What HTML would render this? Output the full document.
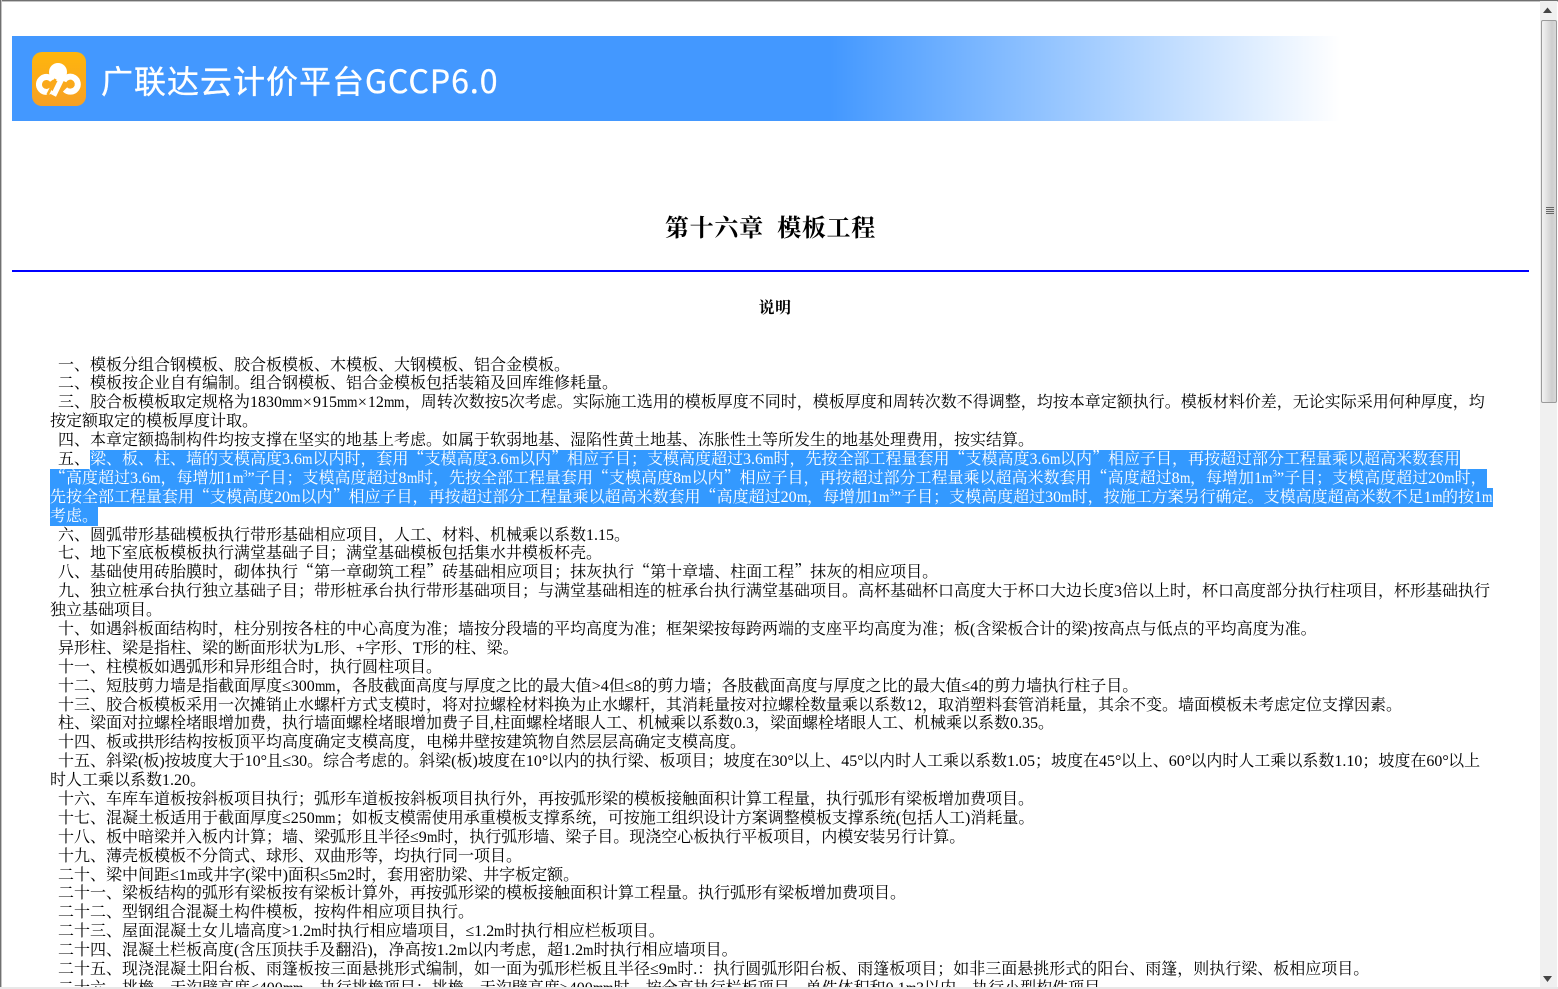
<!DOCTYPE html>
<html lang="zh">
<head>
<meta charset="utf-8">
<title>第十六章 模板工程</title>
<style>
html,body{margin:0;padding:0;width:1558px;height:989px;overflow:hidden;background:#fff}
body{position:relative;font-family:"Liberation Serif","Noto Serif CJK SC",serif;color:#000;font-size:16px}
.abs{position:absolute}
#frameT{left:0;top:0;width:1558px;height:1px;background:#707070;box-shadow:0 1px 0 #c4c4c4}
#frameL{left:0;top:0;width:1px;height:989px;background:#707070;box-shadow:1px 0 0 #c4c4c4}
#frameB{left:0;top:987px;width:1558px;height:2px;background:#e8e8e8;z-index:5}
#banner{left:12px;top:36px;width:1517px;height:85px;background:linear-gradient(to right,#4398ff 0,#4398ff 818px,#fff 1328px)}
#logo{left:20px;top:16px;width:54px;height:54px;border-radius:10px;background:linear-gradient(#ffb60c,#f7a024)}
#brand{left:89px;top:19px;height:50px;line-height:50px;font-family:"Noto Sans CJK SC",sans-serif;font-size:32px;color:#fff;white-space:nowrap;letter-spacing:1px;-webkit-text-stroke:.35px #fff}
#h1{left:0;top:214px;width:1541px;text-align:center;font-size:24px;font-weight:bold;line-height:30px;white-space:pre;letter-spacing:.7px}
#rule{left:12px;top:270px;width:1517px;height:2px;background:#0000ff}
#h2{left:0;top:299px;width:1550px;text-align:center;font-size:16px;font-weight:bold;line-height:19px;letter-spacing:.5px}
#text{left:50px;top:355.5px;width:1480px;height:631.5px;overflow:hidden}
#text div{height:18.9px;line-height:19px;white-space:nowrap}
#text div.i{padding-left:8px}
i{font-style:normal;font-family:"Noto Serif CJK SC",serif;line-height:0}
u{text-decoration:none;display:inline-block;margin-right:-2px;transform:scaleX(.84);transform-origin:0 50%}
s{text-decoration:none;letter-spacing:-.7px}
b{font-weight:normal;letter-spacing:1px}
sup{font-size:9px;line-height:0}
.s{background:#3399ff;color:#fff;display:inline-block;height:19px;line-height:19px;vertical-align:top}
#sb{left:1540px;top:1px;width:17px;height:986px;background:#f0f0f0}
#thumb{left:1px;top:19px;width:14px;height:381px;border:1px solid #9a9a9a;border-radius:2px;background:linear-gradient(to right,#f2f2f2,#e4e4e4 30%,#cfcfcf 70%,#d8d8d8)}
.g{left:4px;width:8px;height:1px;background:#666}
</style>
</head>
<body>
<div class="abs" id="frameT"></div>
<div class="abs" id="frameL"></div>
<div class="abs" id="frameB"></div>

<div class="abs" id="banner">
  <div class="abs" id="logo">
    <svg width="54" height="54" viewBox="0 0 54 54" style="display:block">
      <circle cx="26" cy="20" r="9" fill="#fff"/>
      <path d="M20.5 28A7.5 7.5 0 1 0 19.5 38" fill="none" stroke="#fff" stroke-width="6"/>
      <path d="M23.5 27L15.5 43" fill="none" stroke="#fbaa1a" stroke-width="2.6"/>
      <path d="M31 24L21.5 43.5" fill="none" stroke="#fff" stroke-width="5.5"/>
      <path d="M31.5 29A7.5 7.5 0 1 1 33 37.5" fill="none" stroke="#fff" stroke-width="6"/>
    </svg>
  </div>
  <div class="abs" id="brand">广联达云计价平台GCCP6.0</div>
</div>

<div class="abs" id="h1">第十六章  模板工程</div>
<div class="abs" id="rule"></div>
<div class="abs" id="h2">说明</div>

<div class="abs" id="text">
<div class="i">一、模板分组合钢模板、胶合板模板、木模板、大钢模板、铝合金模板。</div>
<div class="i">二、模板按企业自有编制。组合钢模板、铝合金模板包括装箱及回库维修耗量。</div>
<div class="i">三、胶合板模板取定规格为1830<u>m</u><u>m</u><b>×</b>915<u>m</u><u>m</u><b>×</b>12<u>m</u><u>m</u>，周转次数按5次考虑。实际施工选用的模板厚度不同时，模板厚度和周转次数不得调整，均按本章定额执行。模板材料价差，无论实际采用何种厚度，均</div>
<div>按定额取定的模板厚度计取。</div>
<div class="i">四、本章定额捣制构件均按支撑在坚实的地基上考虑。如属于软弱地基、湿陷性黄土地基、冻胀性土等所发生的地基处理费用，按实结算。</div>
<div class="i">五、<span class="s">梁、板、柱、墙的支模高度3.6<u>m</u>以内时，套用<i>“</i>支模高度3.6<u>m</u>以内<i>”</i>相应子目；支模高度超过3.6<u>m</u>时，先按全部工程量套用<i>“</i>支模高度3.6<u>m</u>以内<i>”</i>相应子目，再按超过部分工程量乘以超高米数套用</span></div>
<div><span class="s"><i>“</i>高度超过3.6<u>m</u>，每增加1<u>m</u><sup>3</sup>”子目；支模高度超过8<u>m</u>时，先按全部工程量套用<i>“</i>支模高度8<u>m</u>以内<i>”</i>相应子目，再按超过部分工程量乘以超高米数套用<i>“</i>高度超过8<u>m</u>，每增加1<u>m</u><sup>3</sup>”子目；支模高度超过20<u>m</u>时，</span></div>
<div><span class="s">先按全部工程量套用<i>“</i>支模高度20<u>m</u>以内<i>”</i>相应子目，再按超过部分工程量乘以超高米数套用<i>“</i>高度超过20<u>m</u>，每增加1<u>m</u><sup>3</sup>”子目；支模高度超过30<u>m</u>时，按施工方案另行确定。支模高度超高米数不足1<u>m</u>的按1<u>m</u></span></div>
<div><span class="s">考虑。</span></div>
<div class="i">六、圆弧带形基础模板执行带形基础相应项目，人工、材料、机械乘以系数1.15。</div>
<div class="i">七、地下室底板模板执行满堂基础子目；满堂基础模板包括集水井模板杯壳。</div>
<div class="i">八、基础使用砖胎膜时，砌体执行<i>“</i>第一章砌筑工程<i>”</i>砖基础相应项目；抹灰执行<i>“</i>第十章墙、柱面工程<i>”</i>抹灰的相应项目。</div>
<div class="i">九、独立桩承台执行独立基础子目；带形桩承台执行带形基础项目；与满堂基础相连的桩承台执行满堂基础项目。高杯基础杯口高度大于杯口大边长度3倍以上时，杯口高度部分执行柱项目，杯形基础执行</div>
<div>独立基础项目。</div>
<div class="i">十、如遇斜板面结构时，柱分别按各柱的中心高度为准；墙按分段墙的平均高度为准；框架梁按每跨两端的支座平均高度为准；板(含梁板合计的梁)按高点与低点的平均高度为准。</div>
<div class="i">异形柱、梁是指柱、梁的断面形状为L形、+字形、T形的柱、梁。</div>
<div class="i">十一、柱模板如遇弧形和异形组合时，执行圆柱项目。</div>
<div class="i">十二、短肢剪力墙是指截面厚度≤300<u>m</u><u>m</u>，各肢截面高度与厚度之比的最大值&gt;4但≤8的剪力墙；各肢截面高度与厚度之比的最大值≤4的剪力墙执行柱子目。</div>
<div class="i">十三、胶合板模板采用一次摊销止水螺杆方式支模时，将对拉螺栓材料换为止水螺杆，其消耗量按对拉螺栓数量乘以系数12，取消塑料套管消耗量，其余不变。墙面模板未考虑定位支撑因素。</div>
<div class="i">柱、梁面对拉螺栓堵眼增加费，执行墙面螺栓堵眼增加费子目,柱面螺栓堵眼人工、机械乘以系数0.3，梁面螺栓堵眼人工、机械乘以系数0.35。</div>
<div class="i">十四、板或拱形结构按板顶平均高度确定支模高度，电梯井壁按建筑物自然层层高确定支模高度。</div>
<div class="i">十五、斜梁(板)按坡度大于10<s>°</s>且≤30。综合考虑的。斜梁(板)坡度在10<s>°</s>以内的执行梁、板项目；坡度在30<s>°</s>以上、45<s>°</s>以内时人工乘以系数1.05；坡度在45<s>°</s>以上、60<s>°</s>以内时人工乘以系数1.10；坡度在60<s>°</s>以上</div>
<div>时人工乘以系数1.20。</div>
<div class="i">十六、车库车道板按斜板项目执行；弧形车道板按斜板项目执行外，再按弧形梁的模板接触面积计算工程量，执行弧形有梁板增加费项目。</div>
<div class="i">十七、混凝土板适用于截面厚度≤250<u>m</u><u>m</u>；如板支模需使用承重模板支撑系统，可按施工组织设计方案调整模板支撑系统(包括人工)消耗量。</div>
<div class="i">十八、板中暗梁并入板内计算；墙、梁弧形且半径≤9<u>m</u>时，执行弧形墙、梁子目。现浇空心板执行平板项目，内模安装另行计算。</div>
<div class="i">十九、薄壳板模板不分筒式、球形、双曲形等，均执行同一项目。</div>
<div class="i">二十、梁中间距≤1<u>m</u>或井字(梁中)面积≤5<u>m</u>2时，套用密肋梁、井字板定额。</div>
<div class="i">二十一、梁板结构的弧形有梁板按有梁板计算外，再按弧形梁的模板接触面积计算工程量。执行弧形有梁板增加费项目。</div>
<div class="i">二十二、型钢组合混凝土构件模板，按构件相应项目执行。</div>
<div class="i">二十三、屋面混凝土女儿墙高度&gt;1.2<u>m</u>时执行相应墙项目，≤1.2<u>m</u>时执行相应栏板项目。</div>
<div class="i">二十四、混凝土栏板高度(含压顶扶手及翻沿)，净高按1.2<u>m</u>以内考虑，超1.2<u>m</u>时执行相应墙项目。</div>
<div class="i">二十五、现浇混凝土阳台板、雨篷板按三面悬挑形式编制，如一面为弧形栏板且半径≤9<u>m</u>时.：执行圆弧形阳台板、雨篷板项目；如非三面悬挑形式的阳台、雨篷，则执行梁、板相应项目。</div>
<div class="i">二十六、挑檐、天沟壁高度≤400<u>m</u><u>m</u>，执行挑檐项目；挑檐、天沟壁高度&gt;400<u>m</u><u>m</u>时，按全高执行栏板项目，单件体积和0.1<u>m</u>3以内，执行小型构件项目。</div>
</div>

<div class="abs" id="sb">
  <svg class="abs" style="left:3px;top:6px" width="10" height="8"><path d="M4.5 0.5L9 6H0Z" fill="#444"/></svg>
  <div class="abs" id="thumb">
    <div class="abs g" style="top:186px"></div>
    <div class="abs g" style="top:188px"></div>
    <div class="abs g" style="top:190px"></div>
    <div class="abs g" style="top:192px"></div>
  </div>
  <svg class="abs" style="left:3px;top:974px" width="10" height="8"><path d="M0 1H9L4.5 7Z" fill="#444"/></svg>
</div>
</body>
</html>
